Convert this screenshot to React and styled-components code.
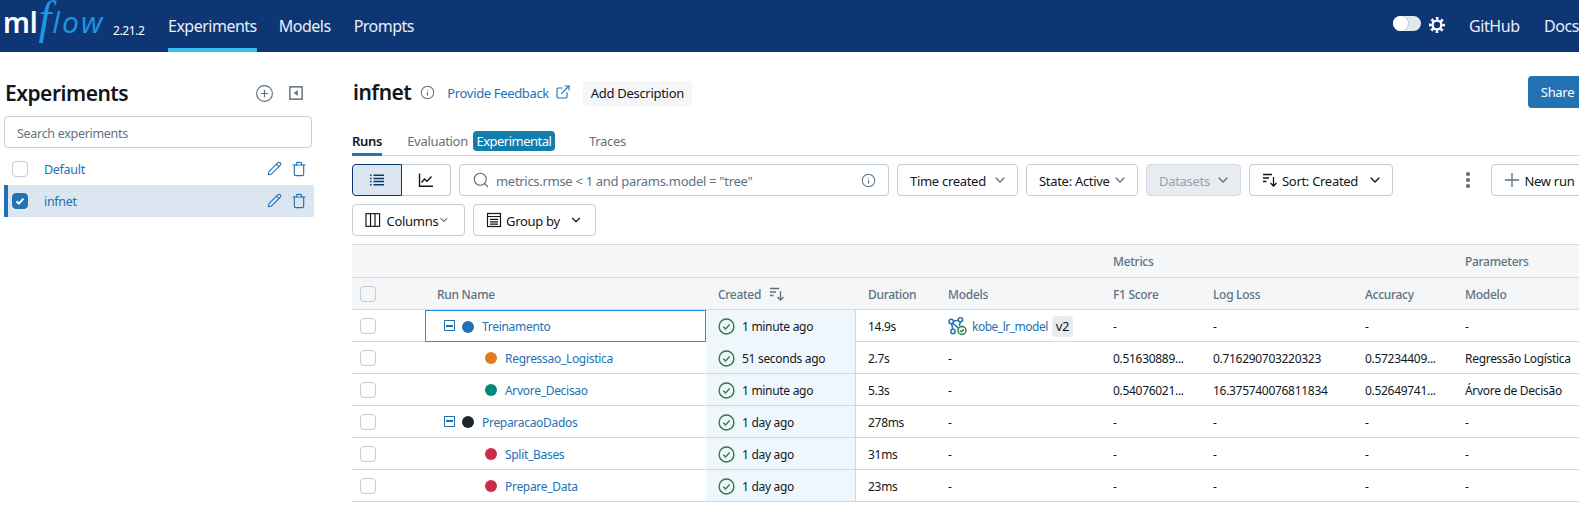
import React from "react";
import styled, { createGlobalStyle } from "styled-components";
import { CirclePlus, Pencil, Trash, Info, ExternalLink, Search, ChevronDown } from "lucide-react";

const FONT = `"Noto Sans", "Open Sans", sans-serif`;
const Global = createGlobalStyle`
  html, body { margin: 0; padding: 0; background: #fff; }
  body { font-family: ${FONT}; font-size: 13px; color: #11171c; letter-spacing: -0.3px; }
  * { box-sizing: border-box; }
`;

const Page = styled.div`width: 1579px; height: 509px; overflow: hidden; display: flex; flex-direction: column;`;
const Header = styled.header`height: 52px; flex: none; background: #0e3675; display: flex; align-items: stretch; color: #fff;`;
const Logo = styled.div`width: 168px; flex: none; display: flex; align-items: flex-start; position: relative; padding-left: 3px;`;
const Ml = styled.span`font: 600 28px/1 "Noto Sans", sans-serif; color: #fff; letter-spacing: -0.2px; margin-top: 8px; margin-right: 1px;`;
const Flow = styled.span`font: italic 400 30px/1 "Open Sans", sans-serif; letter-spacing: 2.2px; margin-top: 3px; color: #1b97e6; white-space: nowrap;`;
const FlowF = styled.span`font: italic 400 46px/29px "Liberation Serif", serif; letter-spacing: 1px;`;
const Version = styled.span`position: absolute; left: 113px; top: 22px; font-size: 12px; color: #fff; letter-spacing: -0.4px;`;
const NavItem = styled.a`
  display: flex; align-items: center; font-size: 16px; height: 52px; margin-right: ${p => (p.$active ? 22 : 23)}px; color: #e9eff5; letter-spacing: -0.5px;
  border-bottom: 4px solid ${p => (p.$active ? "#37bceb" : "transparent")}; border-top: 4px solid transparent;
`;
const HeaderRight = styled.div`margin-left: auto; display: flex; align-items: center;`;
const Toggle = styled.div`width: 28px; height: 15px; margin-top: -5px; border-radius: 8px; background: #e3e8ee; position: relative; margin-right: 8px;`;
const Knob = styled.div`position: absolute; left: 0; top: 0; width: 15px; height: 15px; border-radius: 50%; background: #fff; box-shadow: 1px 0 0 #c0cdd8;`;
const GearWrap = styled.div`width: 16px; height: 16px; margin-right: 24px; margin-top: -2px; display: flex;`;
const HeaderLink = styled.a`font-size: 16px; color: #e9eff5; letter-spacing: -0.4px; width: ${p => p.$w}px; white-space: nowrap; flex: none;`;

const Body = styled.div`flex: 1; display: flex; min-height: 0;`;
const Sidebar = styled.aside`width: 352px; flex: none; padding: 25px 0 0 4px;`;
const SideHead = styled.div`height: 32px; width: 310px; display: flex; align-items: center;`;
const SideTitle = styled.h1`margin: 0 0 0 1px; font-size: 21px; font-weight: 600; letter-spacing: -0.5px; flex: 1; color: #11171c;`;
const IconBtn = styled.span`display: flex; color: #5f7281; margin-left: ${p => p.$ml || 0}px; margin-right: ${p => p.$mr || 0}px;`;
const LinkIcon = styled(IconBtn)`color: #2272b4;`;
const SideSearch = styled.div`
  margin-top: 7px; width: 308px; height: 32px; border: 1px solid #c0cdd8; border-radius: 4px; display: flex; align-items: center; padding: 2px 0 0 12px; color: #5f7281; font-size: 12.5px;
`;
const ExpRow = styled.div`
  width: 310px; height: 32px; display: flex; align-items: center; padding-left: ${p => (p.$sel ? 4 : 8)}px; color: #2272b4; font-size: 12.5px;
  background: ${p => (p.$sel ? "#dbe6f1" : "transparent")}; border-left: ${p => (p.$sel ? "4px solid #2272b4" : "none")};
`;
const ExpList = styled.div`margin-top: 5px;`;
const Check = styled.span`
  width: 16px; height: 16px; flex: none; border-radius: 4px; border: 1px solid ${p => (p.$on ? "#2272b4" : "#c0cdd8")};
  background: ${p => (p.$on ? "#2272b4" : p.$head ? "#f5f6f8" : "#fff")};
  display: flex; align-items: center; justify-content: center;
`;
const ExpName = styled.span`margin-left: 16px; flex: 1;`;
const Actions = styled.span`display: flex; gap: 9px; margin-right: 7px; color: #2272b4;`;

const Main = styled.main`width: 1235px; flex: none; padding-top: 24px;`;
const TitleRow = styled.div`height: 32px; display: flex; align-items: center;`;
const PageTitle = styled.h2`margin: 0 0 0 1px; font-size: 21px; font-weight: 600; letter-spacing: -0.5px;`;
const FeedbackLink = styled.a`color: #2272b4; margin-left: 12px; padding-top: 2px; letter-spacing: -0.35px;`;
const AddDesc = styled.button`
  border: 0; background: #f5f6f8; border-radius: 4px; height: 25px; width: 109px; margin-left: 12px; margin-top: 2px; font: inherit; letter-spacing: inherit; color: #11171c; padding: 0;
`;
const Share = styled.button`margin-left: auto; width: 59px; height: 32px; border: 0; border-radius: 4px; background: #2272b4; color: #fff; font: inherit; letter-spacing: inherit; padding: 0;`;
const Tabs = styled.div`margin-top: 20px; height: 28px; display: flex; border-bottom: 1px solid #d1d9e1; align-items: flex-start; padding-top: 3px;`;
const Tab = styled.span`
  color: ${p => (p.$active ? "#11171c" : "#5f7281")}; font-weight: ${p => (p.$active ? 600 : 400)}; line-height: 20px; height: 25px; margin-left: ${p => p.$ml || 0}px;
  border-bottom: ${p => (p.$active ? "3px solid #2272b4" : "none")};
`;
const Badge = styled.span`background: #137dae; color: #fff; border-radius: 4px; width: 82px; height: 20px; line-height: 20px; text-align: center; margin-left: 5px; margin-right: 34px; letter-spacing: -0.5px;`;
const Toolbar = styled.div`display: flex; margin-top: ${p => p.$mt}px; height: 32px; white-space: nowrap;`;
const ViewToggle = styled.div`display: flex; width: 99px; margin-right: 8px;`;
const ViewBtn = styled.div`
  height: 32px; width: ${p => (p.$active ? 50 : 49)}px; display: flex; align-items: center; justify-content: center;
  background: ${p => (p.$active ? "#dbe6f1" : "#fff")}; color: ${p => (p.$active ? "#0e3675" : "#11171c")};
  border: 1px solid ${p => (p.$active ? "#0e3675" : "#c0cdd8")}; border-left: ${p => (p.$active ? "" : "0")}; border-radius: ${p => (p.$active ? "4px 0 0 4px" : "0 4px 4px 0")};
`;
const SearchBox = styled.div`
  width: 430px; height: 32px; margin-right: 8px; flex: none; border: 1px solid #c0cdd8; border-radius: 4px; display: flex; align-items: center; color: #5f7281; padding: 0 12px;
`;
const SearchText = styled.span`flex: 1; margin-left: 6px; padding-top: 1px;`;
const Btn = styled.button`
  width: ${p => p.$w}px; height: 32px; flex: none; margin-right: ${p => p.$mr ?? 8}px; border: 1px solid ${p => (p.$off ? "#d1d9e1" : "#c0cdd8")}; border-radius: 4px;
  background: ${p => (p.$off ? "#e8ebef" : "#fff")}; color: ${p => (p.$off ? "#92a4b3" : "#11171c")}; font: inherit; letter-spacing: inherit; padding: 0 ${p => p.$pr ?? 9}px 0 12px; display: flex; align-items: center; white-space: nowrap;
`;
const BtnText = styled.span`flex: 1; text-align: left; margin-left: ${p => p.$ml || 0}px; padding-top: 1px;`;
const Kebab = styled.span`margin-left: 73px; width: 10px; margin-right: 21px; display: flex; flex-direction: column; align-items: center; justify-content: center; gap: 2.5px;`;
const Dot3 = styled.i`width: 3.5px; height: 3.5px; border-radius: 50%; background: #5f7281; display: block;`;

const COLS = "73px 281px 150px 80px 165px 100px 152px 100px 1fr";
const Table = styled.div`margin-top: 8px; border-top: 1px solid #d1d9e1; width: 1235px; font-size: 12px;`;
const GroupRow = styled.div`display: grid; grid-template-columns: ${COLS}; height: 33px; background: #f5f6f8; border-bottom: 1px solid #d1d9e1; color: #5f7281; font-weight: 500; align-items: center;`;
const HeadRow = styled(GroupRow)`height: 32px;`;
const Row = styled.div`display: grid; grid-template-columns: ${COLS}; height: 32px; border-bottom: 1px solid #d1d9e1; white-space: nowrap;`;
const HeadCell = styled.div`padding: 1px 0 0 12px; display: flex; align-items: center; grid-column: ${p => p.$col || "auto"};`;
const Cell = styled.div`
  padding: 1px 0 0 12px; display: flex; align-items: center; min-width: 0;
  ${p => p.$created && "background: #f0f7fc; border-right: 1px solid #d1d9e1;"}
`;
const CheckCell = styled.div`padding-left: 8px; display: flex; align-items: center;`;
const NameCell = styled.div`
  display: flex; align-items: center; padding: 1px 0 0 ${p => (p.$child ? 60 : 19)}px; color: #2272b4;
  ${p => p.$focus && "outline: 1px solid #1e96e8; outline-offset: -1px; height: 32px;"}
`;
const Expander = styled.span`
  width: 11px; height: 11px; border: 1px solid #2272b4; margin-right: 7px; margin-top: -2px; display: flex; align-items: center; justify-content: center; flex: none;
  &::before { content: ""; width: 7px; height: 2px; background: #2272b4; display: block; }
`;
const StatusDot = styled.span`width: 12px; height: 12px; border-radius: 50%; background: ${p => p.$c}; margin-right: 8px; flex: none;`;
const CreatedText = styled.span`margin-left: 7px;`;
const ModelLink = styled.span`color: #2272b4; margin-left: 5px; letter-spacing: -0.5px;`;
const VerTag = styled.span`background: #e8ebef; border-radius: 4px; padding: 0 4px; margin-left: 4px; height: 21px; line-height: 21px; font-size: 13px;`;

const Ic = ({ s = 16, sw = 1.5, children, c = "currentColor" }) => (
  <svg width={s} height={s} viewBox="0 0 16 16" fill="none" stroke={c} strokeWidth={sw}>{children}</svg>
);
const Gear = () => (
  <svg width="16" height="16" viewBox="0 0 16 16" fill="none" stroke="#fff">
    <circle cx="8" cy="8" r="4.4" strokeWidth="2.4" />
    <circle cx="8" cy="8" r="6.6" strokeWidth="2.8" strokeDasharray="2.6 2.58" strokeDashoffset="1.3" />
  </svg>
);
const Collapse = () => (
  <Ic s={14} sw={1.7}><rect x="1" y="1" width="14" height="14" /><path d="M10 4.5v7L5.5 8z" fill="currentColor" stroke="none" /></Ic>
);
const ListIc = () => (
  <Ic><path d="M1 3.2h1.5M1 6.4h1.5M1 9.6h1.5M1 12.8h1.5M4.5 3.2H15M4.5 6.4H15M4.5 9.6H15M4.5 12.8H15" /></Ic>
);
const ChartIc = () => (
  <Ic sw={1.4}><path d="M1.5 1.5v12.7H15" /><path d="M3.5 10.5l3-3.5 2.5 2.2L13.5 4.5" /></Ic>
);
const ColumnsIc = () => (
  <Ic sw={1.2}><rect x="1" y="1.5" width="14" height="13" /><path d="M5.7 1.5v13M10.3 1.5v13" /></Ic>
);
const GroupIc = () => (
  <Ic sw={1.2}><rect x="1.5" y="1.5" width="13" height="13" /><path d="M1.5 4.5h13M4 7.3h8M4 9.8h8M4 12.2h8" /></Ic>
);
const SortIc = () => (
  <Ic sw={1.3}><path d="M1 2.5h9M1 6h6M1 9.5h3.5M11.5 5v9M8.5 11l3 3 3-3" /></Ic>
);
const PlusIc = () => (
  <Ic sw={1.3} c="#5f7281"><path d="M8 1v14M1 8h14" /></Ic>
);
const Tick = () => (
  <Ic s={17} sw={1.3} c="#277c43"><circle cx="8" cy="8" r="7" /><path d="M5 8.3l2.1 2.1L11 6" /></Ic>
);
const ModelIc = () => (
  <svg width="19" height="19" viewBox="0 0 19 19" fill="none" stroke="#2272b4" strokeWidth="1.5">
    <circle cx="3.2" cy="4.5" r="2.2" /><circle cx="12.5" cy="2.8" r="2.2" /><circle cx="5" cy="14.5" r="2.2" />
    <path d="M5.5 4.2l4.8-1M3.7 6.7l1 5.6M4.8 6.2l6 5.2M12.3 5l-1 4" />
    <circle cx="14" cy="13.5" r="4" stroke="#277c43" fill="#fff" /><path d="M12.3 13.6l1.3 1.2 2.2-2.3" stroke="#277c43" />
  </svg>
);
const Chev = ({ s = 16, c }) => <ChevronDown size={s} strokeWidth={2} color={c} />;
const RowActions = () => (
  <Actions><Pencil size={15} strokeWidth={1.7} /><Trash size={16} strokeWidth={1.7} /></Actions>
);

const rows = [
  { n: "Treinamento", c: "#2272b4", exp: true, focus: true, t: "1 minute ago", d: "14.9s", model: true, m: ["-", "-", "-", "-"] },
  { n: "Regressao_Logistica", c: "#e07b20", child: true, t: "51 seconds ago", d: "2.7s", m: ["0.51630889...", "0.716290703220323", "0.57234409...", "Regressão Logística"] },
  { n: "Arvore_Decisao", c: "#00897b", child: true, t: "1 minute ago", d: "5.3s", m: ["0.54076021...", "16.375740076811834", "0.52649741...", "Árvore de Decisão"] },
  { n: "PreparacaoDados", c: "#1f272d", exp: true, t: "1 day ago", d: "278ms", m: ["-", "-", "-", "-"] },
  { n: "Split_Bases", c: "#c82d4c", child: true, t: "1 day ago", d: "31ms", m: ["-", "-", "-", "-"] },
  { n: "Prepare_Data", c: "#c82d4c", child: true, t: "1 day ago", d: "23ms", m: ["-", "-", "-", "-"] },
];

export default function App() {
  return (
    <Page>
      <Global />
      <Header>
        <Logo>
          <Ml>ml</Ml>
          <Flow><FlowF>f</FlowF>low</Flow>
          <Version>2.21.2</Version>
        </Logo>
        <NavItem $active>Experiments</NavItem>
        <NavItem>Models</NavItem>
        <NavItem>Prompts</NavItem>
        <HeaderRight>
          <Toggle><Knob /></Toggle>
          <GearWrap><Gear /></GearWrap>
          <HeaderLink $w={75}>GitHub</HeaderLink>
          <HeaderLink $w={35}>Docs</HeaderLink>
        </HeaderRight>
      </Header>
      <Body>
        <Sidebar>
          <SideHead>
            <SideTitle>Experiments</SideTitle>
            <IconBtn $mr={15}><CirclePlus size={19} strokeWidth={1.5} /></IconBtn>
            <IconBtn $mr={11}><Collapse /></IconBtn>
          </SideHead>
          <SideSearch>Search experiments</SideSearch>
          <ExpList>
            <ExpRow>
              <Check />
              <ExpName>Default</ExpName>
              <RowActions />
            </ExpRow>
            <ExpRow $sel>
              <Check $on><svg width="12" height="12" viewBox="0 0 12 12" fill="none" stroke="#fff" strokeWidth="2"><path d="M2.5 6.2l2.4 2.4 4.6-5" /></svg></Check>
              <ExpName>infnet</ExpName>
              <RowActions />
            </ExpRow>
          </ExpList>
        </Sidebar>
        <Main>
          <TitleRow>
            <PageTitle>infnet</PageTitle>
            <IconBtn $ml={9}><Info size={15} strokeWidth={1.7} /></IconBtn>
            <FeedbackLink>Provide Feedback</FeedbackLink>
            <LinkIcon $ml={6}><ExternalLink size={16} strokeWidth={1.7} /></LinkIcon>
            <AddDesc>Add Description</AddDesc>
            <Share>Share</Share>
          </TitleRow>
          <Tabs>
            <Tab $active>Runs</Tab>
            <Tab $ml={25}>Evaluation</Tab>
            <Badge>Experimental</Badge>
            <Tab>Traces</Tab>
          </Tabs>
          <Toolbar $mt={8}>
            <ViewToggle>
              <ViewBtn $active><ListIc /></ViewBtn>
              <ViewBtn><ChartIc /></ViewBtn>
            </ViewToggle>
            <SearchBox>
              <Search size={18} strokeWidth={1.5} />
              <SearchText>metrics.rmse &lt; 1 and params.model = "tree"</SearchText>
              <Info size={15} strokeWidth={1.7} />
            </SearchBox>
            <Btn $w={121}><BtnText>Time created</BtnText><Chev c="#5f7281" /></Btn>
            <Btn $w={112}><BtnText>State: Active</BtnText><Chev c="#5f7281" /></Btn>
            <Btn $w={95} $off><BtnText>Datasets</BtnText><Chev c="#5f7281" /></Btn>
            <Btn $w={144} $mr={0}><SortIc /><BtnText $ml={4}>Sort: Created</BtnText><Chev /></Btn>
            <Kebab><Dot3 /><Dot3 /><Dot3 /></Kebab>
            <Btn $w={110} $mr={0}><PlusIc /><BtnText $ml={5}>New run</BtnText></Btn>
          </Toolbar>
          <Toolbar $mt={8}>
            <Btn $w={113} $pr={14}><ColumnsIc /><BtnText $ml={6}>Columns</BtnText><Chev s={12} /></Btn>
            <Btn $w={123} $pr={12}><GroupIc /><BtnText $ml={4}>Group by</BtnText><Chev s={14} /></Btn>
          </Toolbar>
          <Table>
            <GroupRow>
              <HeadCell $col="6">Metrics</HeadCell>
              <HeadCell $col="9">Parameters</HeadCell>
            </GroupRow>
            <HeadRow>
              <CheckCell><Check $head /></CheckCell>
              <HeadCell>Run Name</HeadCell>
              <HeadCell>Created<IconBtn $ml={8}><SortIc /></IconBtn></HeadCell>
              <HeadCell>Duration</HeadCell>
              <HeadCell>Models</HeadCell>
              <HeadCell>F1 Score</HeadCell>
              <HeadCell>Log Loss</HeadCell>
              <HeadCell>Accuracy</HeadCell>
              <HeadCell>Modelo</HeadCell>
            </HeadRow>
            {rows.map(r => (
              <Row key={r.n}>
                <CheckCell><Check /></CheckCell>
                <NameCell $child={r.child} $focus={r.focus}>
                  {r.exp && <Expander />}
                  <StatusDot $c={r.c} />
                  {r.n}
                </NameCell>
                <Cell $created><Tick /><CreatedText>{r.t}</CreatedText></Cell>
                <Cell>{r.d}</Cell>
                <Cell>
                  {r.model ? (<><ModelIc /><ModelLink>kobe_lr_model</ModelLink><VerTag>v2</VerTag></>) : "-"}
                </Cell>
                {r.m.map((v, i) => <Cell key={i}>{v}</Cell>)}
              </Row>
            ))}
          </Table>
        </Main>
      </Body>
    </Page>
  );
}
